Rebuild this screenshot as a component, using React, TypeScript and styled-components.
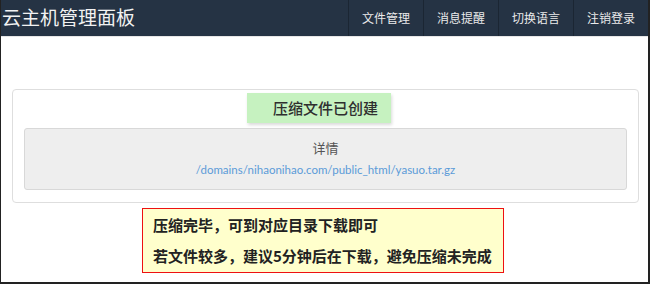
import * as React from 'react';
import styled, { createGlobalStyle } from 'styled-components';

const cjk = `"Noto Sans CJK SC", "Noto Sans", sans-serif`;

const GlobalStyle = createGlobalStyle`
	html, body {
		margin: 0;
		padding: 0;
		background: #fff;
	}
	body {
		font-family: ${cjk};
	}
`;

const StyledFrame = styled.div`
	box-sizing: border-box;
	width: 650px;
	height: 284px;
	border-left: 1px solid #222;
	border-right: 2px solid #222;
	border-bottom: 2px solid #222;
	overflow: hidden;
	background: #fff;
`;

const StyledNavbar = styled.div`
	display: flex;
	align-items: stretch;
	justify-content: space-between;
	height: 36px;
	background: #253344;
	border-bottom: 1px solid #e6e6e6;
`;

const StyledBrand = styled.div`
	padding-left: 1px;
	font-family: ${cjk};
	font-size: 19px;
	line-height: 34px;
	color: #f2f2f2;
`;

const StyledMenu = styled.nav`
	display: flex;
`;

const StyledMenuItem = styled.a`
	display: flex;
	align-items: center;
	padding: 0 13px 2px 13px;
	border-left: 1px solid #1b2633;
	font-family: ${cjk};
	font-size: 12px;
	color: #eaeaea;
	text-decoration: none;
	cursor: pointer;
`;

const StyledPanel = styled.div`
	margin: 52px 9px 0 11px;
	padding: 3px 11px 12px 11px;
	border: 1px solid #dedede;
	border-radius: 4px;
	text-align: center;
`;

const StyledBadge = styled.div`
	display: inline-block;
	height: 30px;
	margin-right: 13px;
	padding: 0 13px 0 26px;
	background: #c6f2c0;
	box-shadow: 1px 2px 3px rgba(0, 0, 0, 0.15);
	font-family: ${cjk};
	font-size: 15px;
	font-weight: 500;
	line-height: 30px;
	color: #2f2f2f;
`;

const StyledWell = styled.div`
	box-sizing: border-box;
	display: flex;
	flex-direction: column;
	align-items: center;
	height: 62px;
	margin-top: 5px;
	padding-top: 9px;
	border: 1px solid #d8d8d8;
	border-radius: 3px;
	background: #eeeeee;
`;

const StyledWellTitle = styled.div`
	font-family: ${cjk};
	font-size: 13px;
	line-height: 20px;
	color: #555;
`;

const StyledPath = styled.a`
	margin-top: 3px;
	font-family: Lato, "Noto Sans", sans-serif;
	font-size: 11.5px;
	line-height: 18px;
	color: #5b9bd8;
	text-decoration: none;
`;

const StyledNote = styled.div`
	box-sizing: border-box;
	width: 362px;
	height: 65px;
	margin: 5px 0 0 141px;
	padding: 0 0 0 10px;
	border: 1px solid #ee1111;
	background: #ffffcc;
	font-family: ${cjk};
	font-size: 15px;
	font-weight: 700;
	line-height: 31px;
	color: #222;
`;

const menu = ['文件管理', '消息提醒', '切换语言', '注销登录'];

export default function App() {
	return (
		<>
			<GlobalStyle />
			<StyledFrame>
				<StyledNavbar>
					<StyledBrand>云主机管理面板</StyledBrand>
					<StyledMenu>
						{menu.map(item => (
							<StyledMenuItem key={item}>{item}</StyledMenuItem>
						))}
					</StyledMenu>
				</StyledNavbar>
				<StyledPanel>
					<StyledBadge>压缩文件已创建</StyledBadge>
					<StyledWell>
						<StyledWellTitle>详情</StyledWellTitle>
						<StyledPath>/domains/nihaonihao.com/public_html/yasuo.tar.gz</StyledPath>
					</StyledWell>
				</StyledPanel>
				<StyledNote>
					<div>压缩完毕，可到对应目录下载即可</div>
					<div>若文件较多，建议5分钟后在下载，避免压缩未完成</div>
				</StyledNote>
			</StyledFrame>
		</>
	);
}
